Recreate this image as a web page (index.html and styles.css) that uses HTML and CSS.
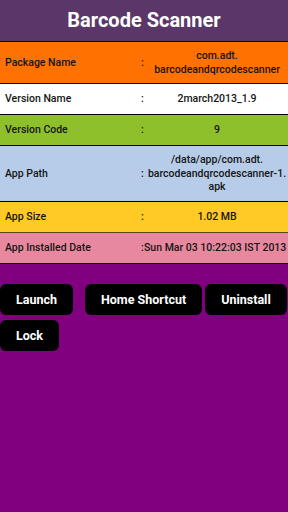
FILE: index.html
```html
<!DOCTYPE html>
<html lang="en">
<head>
  <meta charset="UTF-8" />
  <title>Barcode Scanner</title>
  <meta name="viewport" content="width=device-width, initial-scale=1.0" />
  <link rel="stylesheet" href="styles.css">
</head>
<body>
  <div class="app-screen">
    <div class="app-header">Barcode Scanner</div>

    <div class="info-list">
      <div class="info-row row-orange">
        <span class="info-label">Package Name</span>
        <span class="info-colon">:</span>
        <span class="info-value">com.adt.<br>barcodeandqrcodescanner</span>
      </div>
      <div class="info-row row-white">
        <span class="info-label">Version Name</span>
        <span class="info-colon">:</span>
        <span class="info-value">2march2013_1.9</span>
      </div>
      <div class="info-row row-green">
        <span class="info-label">Version Code</span>
        <span class="info-colon">:</span>
        <span class="info-value">9</span>
      </div>
      <div class="info-row row-blue">
        <span class="info-label">App Path</span>
        <span class="info-colon">:</span>
        <span class="info-value">/data/app/com.adt.<br>barcodeandqrcodescanner-1.<br>apk</span>
      </div>
      <div class="info-row row-yellow">
        <span class="info-label">App Size</span>
        <span class="info-colon">:</span>
        <span class="info-value">1.02 MB</span>
      </div>
      <div class="info-row row-pink">
        <span class="info-label">App Installed Date</span>
        <span class="info-colon">:</span>
        <span class="info-value value-left">Sun Mar 03 10:22:03 IST 2013</span>
      </div>
    </div>

    <div class="action-bar">
      <button class="action-btn btn-launch">Launch</button>
      <button class="action-btn">Home Shortcut</button>
      <button class="action-btn">Uninstall</button>
    </div>
    <div class="action-bar">
      <button class="action-btn">Lock</button>
    </div>
  </div>
</body>
</html>
```

FILE: styles.css
```css
* {
  box-sizing: border-box;
}

html, body {
  margin: 0;
  padding: 0;
  width: 100%;
  height: 100%;
  background: #800080;
  font-family: Roboto, 'Noto Sans', sans-serif;
  overflow: hidden;
}

.app-screen {
  width: 288px;
  min-height: 512px;
  display: flex;
  flex-direction: column;
}

.app-header {
  height: 42px;
  background: #5a3768;
  border-bottom: 1px solid #000;
  color: #fff;
  font-size: 20px;
  font-weight: 700;
  display: flex;
  align-items: center;
  justify-content: center;
  padding-bottom: 1px;
}

.info-list {
  display: flex;
  flex-direction: column;
}

.info-row {
  display: grid;
  grid-template-columns: 141px 5px 1fr;
  align-items: center;
  min-height: 31px;
  padding: 7px 0;
  border-bottom: 1px solid #000;
  font-size: 10.5px;
  line-height: 13.5px;
  font-weight: 500;
  color: #151515;
}

.info-label {
  padding-left: 5px;
}

.info-colon {
  text-align: left;
}

.info-value {
  text-align: center;
  white-space: nowrap;
}

.value-left {
  text-align: left;
  margin-left: -2px;
}

.row-orange { background: #ff7100; }
.row-white { background: #ffffff; }
.row-green { background: #8ec02b; }
.row-blue { background: #b7cce8; }
.row-yellow { background: #ffc926; border-bottom-color: #5c4a10; }
.row-pink { background: #e8889f; }

.action-bar {
  display: flex;
  gap: 3px;
}

.info-list + .action-bar {
  margin-top: 20px;
}

.action-bar + .action-bar {
  margin-top: 5px;
}

.action-btn {
  height: 31px;
  padding: 0 16px;
  background: #000;
  color: #fff;
  border: none;
  border-radius: 6px;
  font-family: Roboto, 'Noto Sans', sans-serif;
  font-size: 12.5px;
  font-weight: 700;
  cursor: pointer;
}

.btn-launch {
  margin-right: 9px;
}
```
